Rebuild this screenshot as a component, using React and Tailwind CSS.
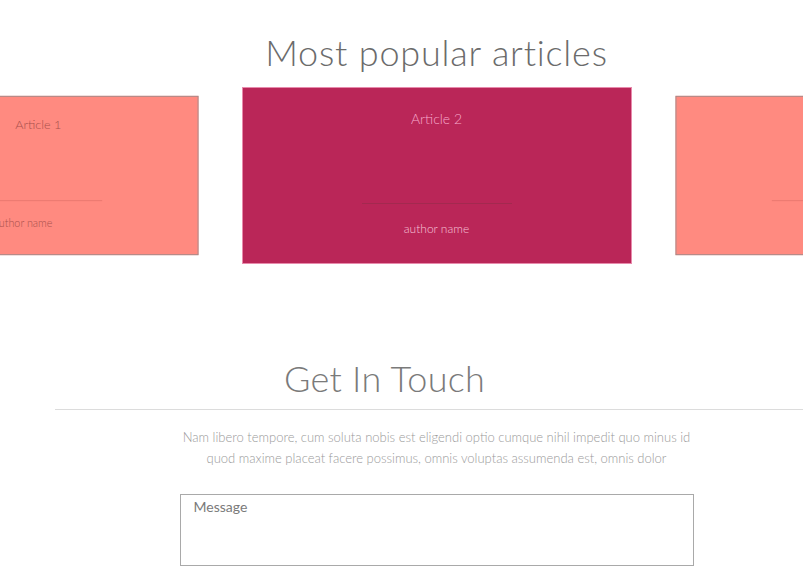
import React from 'react'

const articles = [
  { id: 1, title: 'Article 1', author: 'author name', active: false },
  { id: 2, title: 'Article 2', author: 'author name', active: true },
  { id: 3, title: 'Article 3', author: 'author name', active: false },
]

function ArticleCard({ article }) {
  if (article.active) {
    return (
      <div className="w-[390px] h-[177px] shrink-0 bg-[#ba2658] border border-[#e88aac] flex flex-col items-center">
        <p className="mt-[21px] text-[14px] leading-5 font-light text-[#f6a9cb]">{article.title}</p>
        <div className="mt-[74px] w-[150px] h-px bg-[#a3294f]"></div>
        <p className="mt-[17px] text-[12px] leading-4 font-light text-[#f6c2d7]">{article.author}</p>
      </div>
    )
  }
  return (
    <div className="w-[390px] h-[177px] shrink-0 scale-90 bg-[#ff8a80] border border-[#a08a8a] flex flex-col items-center">
      <p className="mt-[21px] ml-[34px] text-[14px] leading-5 font-light text-[#a8504c]">{article.title}</p>
      <div className="mt-[74px] w-[176px] h-px bg-[#e8776e]"></div>
      <p className="mt-[17px] text-[12px] leading-4 font-light text-[#a8504c]">{article.author}</p>
    </div>
  )
}

export default function App() {
  return (
    <div className="w-full min-h-[573px] bg-white overflow-hidden font-['Lato','Noto_Sans',sans-serif]">
      {/* Popular articles */}
      <section className="pt-[31px] pl-[70px]">
        <h2 className="text-center text-[36px] leading-[43px] font-light text-[#6b6b6b] tracking-[0.8px]">
          Most popular articles
        </h2>
        <div className="mt-[13px] flex justify-center">
          <div className="flex gap-[24px] shrink-0">
            {articles.map(a => (
              <ArticleCard key={a.id} article={a} />
            ))}
          </div>
        </div>
      </section>

      {/* Contact */}
      <section className="mt-[93px]">
        <h2 className="pl-[70px] pr-[104px] text-center text-[36px] leading-[43px] font-light text-[#7a7a7a] tracking-[0.3px]">
          Get In Touch
        </h2>
        <div className="ml-[55px] mt-[9px] h-px bg-[#dcdcdc]"></div>
        <div className="pl-[70px] flex flex-col items-center">
          <p className="mt-[17px] w-[516px] text-center text-[13px] leading-[21px] font-light text-[#9a9a9a]">
            Nam libero tempore, cum soluta nobis est eligendi optio cumque nihil impedit quo minus id quod maxime placeat facere possimus, omnis voluptas assumenda est, omnis dolor
          </p>
          <textarea
            placeholder="Message"
            className="mt-[25px] w-[514px] h-[72px] resize-none border border-[#a9a9a9] px-[13px] pt-[2px] text-[14px] leading-5 text-[#555] placeholder:text-[#7a7a7a] outline-none font-['Lato',sans-serif]"
          ></textarea>
        </div>
      </section>
    </div>
  )
}
